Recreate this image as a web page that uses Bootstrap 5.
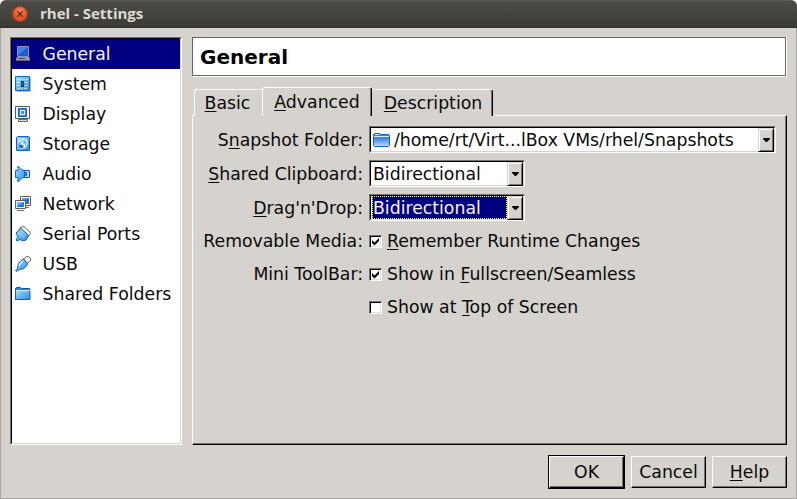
<!DOCTYPE html>
<html lang="en">
<head>
<meta charset="utf-8">
<meta name="viewport" content="width=device-width, initial-scale=1">
<title>rhel - Settings</title>
<link href="https://cdn.jsdelivr.net/npm/bootstrap@5.3.0/dist/css/bootstrap.min.css" rel="stylesheet">
<style>
body{font-family:"DejaVu Sans",sans-serif;font-size:17.3px;line-height:20px;color:#0a0a0a;background:#fff;overflow:hidden}
u{text-decoration:underline;text-decoration-thickness:1px;text-underline-offset:2px;text-decoration-skip-ink:none}
.win{width:797px;height:499px;background:#d6d2cd;border-radius:6px 6px 0 0;overflow:hidden}
.titlebar{height:28px;padding-left:12px;background:linear-gradient(#5a5954 0,#4c4b45 2px,#45443f 50%,#3c3b37 92%,#32312e 100%);color:#dfdbd2;font:bold 15px/28px "Open Sans","Noto Sans",sans-serif}
.titlebar span{margin-left:12px;line-height:27px;height:28px}
.client{height:471px;border:1px solid #aaa6a1;border-top:0;padding:9px 9px 10px 9px}
.side{width:172px;height:408px;background:#fff;border:1px solid;border-color:#76736e #fff #fff #76736e}
.side-in{height:406px;border:1px solid;border-color:#000 #d6d2cd #d6d2cd #000}
.side .list-group-item{height:30px;border:0;border-radius:0;padding:0 0 0 3px;gap:11.500px;background:none;color:#0a0a0a;white-space:nowrap}
.side .list-group-item.active{background:#000080;color:#f4f4ff;margin:0}
.side svg{flex:none}
.main{width:595px}
.heading{height:40px;border:1px solid;border-color:transparent #fff #fff transparent;border-width:0 1px 1px 0}
.heading h1{height:39px;margin:0;border:1px solid #666;background:#fff;font-size:20px;line-height:38px;font-weight:700;color:#000;padding-left:7px}
.tabs{height:29px;margin-top:10px;padding-left:2px}
.tb{height:27px;border:1px solid;border-color:#fff #000 transparent #fff;border-bottom:0;border-radius:3px 3px 0 0;line-height:26px;text-align:center;color:#0a0a0a;background:#d6d2cd}
.tb-a{width:69px;border-right:0;padding-right:3px}
.tb-b{width:110px;height:29px;line-height:28px;margin-left:-1px;z-index:1;box-shadow:inset -1px 0 #77746f;position:relative}
.tb-c{width:121px;border-left:0;box-shadow:inset -1px 0 #77746f;padding-left:2px}
.pane{height:330px;border:1px solid;border-color:#fff #000 #000 #fff;box-shadow:inset -1px -1px #77746f;margin-top:-1px;padding-top:10px}
.frow{height:27px;margin-bottom:7px}
.frow.chk{height:26px}
.lab{width:170px;margin-right:6px;text-align:right;white-space:nowrap;flex:none}
.combo{height:27px;border:1px solid;border-color:#76736e #fff #fff #76736e;width:156px}
.combo-in{height:25px;border:1px solid;border-color:#000 #d6d2cd #d6d2cd #000;background:#fff;padding:0}
.combo.wide{width:407px}
.val{height:23px;line-height:24px;white-space:nowrap;padding-left:2px;min-width:0}
.val.sel{background:#000080;color:#f4f4ff;outline:1px dotted #ffff7f;outline-offset:-1px;margin:0 0 0 1px;padding-left:1px}
.arr{width:16px;height:24px;flex:none;background:#d6d2cd;border:1px solid;border-color:#d6d2cd #000 #000 #d6d2cd;box-shadow:inset 1px 1px #fff,inset -1px -1px #77746f}
.box{width:13px;height:13px;flex:none;margin-right:5px;background:#fff;border:1px solid;border-color:#76736e #fff #fff #76736e;box-shadow:inset 1px 1px #000,inset -1px -1px #e4dede}
.box svg{display:block}
.foot{margin-top:10px;gap:6px}
.foot .btn{width:75px;height:32px;border:1px solid;border-color:#fff #000 #000 #fff;border-radius:0;padding:0;font-size:17.3px;line-height:29px;background:#d6d2cd;color:#0a0a0a;box-shadow:inset -1px -1px #77746f}
.foot .okf{border:1px solid #000;height:34px;width:77px}
</style>
<script src="https://cdn.jsdelivr.net/npm/bootstrap@5.3.0/dist/js/bootstrap.bundle.min.js"></script>
</head>
<body>
<svg width="0" height="0" class="position-absolute">
<defs>
<linearGradient id="b" x1="0" y1="0" x2="1" y2="1"><stop offset="0" stop-color="#a4dffd"/><stop offset="1" stop-color="#2a88ea"/></linearGradient>
<linearGradient id="f" x1="0" y1="0" x2="0" y2="1"><stop offset="0" stop-color="#2f7fdf"/><stop offset=".4" stop-color="#4088e2"/><stop offset="1" stop-color="#c4dcfa"/></linearGradient>
<radialGradient id="c" cy=".3"><stop offset="0" stop-color="#f98560"/><stop offset="1" stop-color="#e5501f"/></radialGradient>
</defs>
</svg>
<div class="win">
<header class="titlebar d-flex align-items-center">
<svg width="16" height="16" viewBox="0 0 16 16"><circle cx="8" cy="8" r="7.500" fill="url(#c)" stroke="#9c3a1d" stroke-width=".8"/><path d="M5.400 5.400l5.200 5.200M10.600 5.400l-5.200 5.200" stroke="#4b2114" stroke-width="1.300"/></svg>
<span>rhel - Settings</span>
</header>
<div class="client d-flex justify-content-between">
<nav class="side">
<div class="side-in list-group rounded-0">
<a class="list-group-item active d-flex align-items-center"><svg width="16" height="16"><path d="M2.500 .5h11v10h-11z" fill="#1d5bd0" stroke="#8c8fb5"/><path d="M3 1h10L3 9z" fill="#3d83e8"/><path d="M2 11h12l1 2v2H1v-2z" fill="#9a9bc0"/><path d="M1 14.500h14" stroke="#5c5c82"/><path d="M3 12.500h7" stroke="#44446c"/></svg>General</a>
<a class="list-group-item d-flex align-items-center"><svg width="16" height="16"><path d="M.5.500h14v14H.5z" fill="url(#b)" stroke="#1268c4"/><path d="M15.500 2v13.500H2" fill="none" stroke="#b9b9a8"/><path d="M3 3.500h2m1 0h1m2-1v2m2-1h2M2.500 6.500h2m-2 3h2m6-3h2m-2 3h2M3 12.500h2m2-1v2m3-2v2m1-1h1" stroke="#e2f6ff"/><path d="M6 5h3v6H6z" fill="#263c50"/><path d="M7 6h1v3H7z" fill="#62768a"/></svg>System</a>
<a class="list-group-item d-flex align-items-center"><svg width="16" height="16"><path d="M3.500 13.500h9v2h-9z" fill="#ddd" stroke="#6c6c62"/><path d="M.5.500h14v12H.5z" fill="#f5f5ef" stroke="#56564e"/><path d="M3.500 2.500h8v8h-8z" fill="#2686f2" stroke="#1560d0"/><path d="M5.500 4.500h4v4h-4z" fill="#3c96fa" stroke="#fff"/></svg>Display</a>
<a class="list-group-item d-flex align-items-center"><svg width="16" height="16"><path d="M2.500.500h11l1 1v13h-13v-13z" fill="url(#b)" stroke="#1460b8"/><path d="M4 6.500c0-4.500 8-4.500 8 0 0 4-2.500 5.500-4.500 5.500 2.500-1.500 2.500-3 1.500-4-3 1-3-2.500-.5-2.500" fill="none" stroke="#fff" stroke-width="1.200"/><path d="M4.500 9.500l3.500 2" stroke="#174d98" stroke-width="1.500"/></svg>Storage</a>
<a class="list-group-item d-flex align-items-center"><svg width="16" height="16"><path d="M8.500 4.500h6v7h-6z" fill="#9adcff" stroke="#145dae"/><path d="M2.500.5c2 0 3 2 4 3 1 .5 2 1 3 1v7c-1 0-2 .5-3 1-1 1-2 3-4 3 .5-1.500.5-2.500.5-4H.5v-7H3c0-1.500 0-3-.5-4z" fill="url(#b)" stroke="#1763b6"/><path d="M11 6v4" stroke="#2077d8" stroke-width="2"/></svg>Audio</a>
<a class="list-group-item d-flex align-items-center"><svg width="16" height="16"><path d="M8 11.500h6" stroke="#77776f"/><path d="M5.500.500h10v9h-10z" fill="#fff" stroke="#5e5e58"/><path d="M7 2h7v6H7z" fill="#176fe4"/><path d="M7 2h7L7 6z" fill="#4a9cf4"/><path d="M.5 4.500h10v8H.5z" fill="#fff" stroke="#5e5e58"/><path d="M2 6h7v5H2z" fill="#1f7de8"/><path d="M2 6h7l-7 4z" fill="#70b8ff"/><path d="M2 14.500h7" stroke="#77776f"/></svg>Network</a>
<a class="list-group-item d-flex align-items-center"><svg width="16" height="16"><path d="M5 1.500l4-1 6.500 6-1 3-3 2-7-7z" fill="#f2f2ef" stroke="#70706a"/><path d="M1 7l5-4.500 7.500 7-2.500 4.500-3 1-3-1.500-3 1.500-1-1 2-3z" fill="url(#b)" stroke="#155eb4"/><path d="M4 6.500l5 5M6 4.500l5 5" stroke="#c7edff"/></svg>Serial Ports</a>
<a class="list-group-item d-flex align-items-center"><svg width="16" height="16"><path d="M8.500 3l3-2.500h2l2 2v2l-3 3z" fill="#f4f4f0" stroke="#666660"/><path d="M8.500 3l4 4.500c-1 4-5 6-8 6l-3 2-1-1 2-2c0-4 2-7.500 6-9.500z" fill="url(#b)" stroke="#155eb4"/><path d="M4 10c1-2 2-4 4-5" fill="none" stroke="#e2f6ff" stroke-width="1.500"/></svg>USB</a>
<a class="list-group-item d-flex align-items-center"><svg width="16" height="16"><path d="M.5 2.500l1-1h4l1 1h8v11H.5z" fill="#2382dc" stroke="#0e5eb0"/><path d="M1 4.500h14v9H1z" fill="url(#b)"/><path d="M1 4.500h14" stroke="#c8efff"/><path d="M.5 3v10.500h14.500v-9" fill="none" stroke="#1263b4"/></svg>Shared Folders</a>
</div>
</nav>
<main class="main">
<div class="heading"><h1>General</h1></div>
<div class="tabs d-flex align-items-end">
<div class="tb tb-a"><u>B</u>asic</div><div class="tb tb-b"><u>A</u>dvanced</div><div class="tb tb-c"><u>D</u>escription</div>
</div>
<div class="pane">
<div class="frow d-flex align-items-center"><div class="lab">S<u>n</u>apshot Folder:</div><div class="combo wide"><div class="combo-in d-flex"><div class="val flex-grow-1 d-flex align-items-center"><svg width="17" height="16" class="me-1"><path d="M.5 3l1-1.500h5l1 1h8l1 1v10l-1 1h-14l-1-1z" fill="url(#f)" stroke="#1765c4"/><path d="M2 2.500h4M1 4.500h15" stroke="#d7edff"/></svg><span>/home/rt/Virt...lBox VMs/rhel/Snapshots</span></div><div class="arr d-flex align-items-center justify-content-center"><svg width="7" height="4"><path d="M0 0h7v1L4 4H3L0 1z"/></svg></div></div></div></div>
<div class="frow d-flex align-items-center"><div class="lab"><u>S</u>hared Clipboard:</div><div class="combo"><div class="combo-in d-flex"><div class="val flex-grow-1">Bidirectional</div><div class="arr d-flex align-items-center justify-content-center"><svg width="7" height="4"><path d="M0 0h7v1L4 4H3L0 1z"/></svg></div></div></div></div>
<div class="frow d-flex align-items-center"><div class="lab"><u>D</u>rag'n'Drop:</div><div class="combo"><div class="combo-in d-flex"><div class="val sel flex-grow-1">Bidirectional</div><div class="arr d-flex align-items-center justify-content-center"><svg width="7" height="4"><path d="M0 0h7v1L4 4H3L0 1z"/></svg></div></div></div></div>
<div class="frow chk d-flex align-items-center"><div class="lab">Removable Media:</div><div class="box"><svg width="11" height="11"><path d="M2 4l2.500 2.500L9 2v3L4.500 9.500 2 7z"/></svg></div><div><u>R</u>emember Runtime Changes</div></div>
<div class="frow chk d-flex align-items-center"><div class="lab">Mini ToolBar:</div><div class="box"><svg width="11" height="11"><path d="M2 4l2.500 2.500L9 2v3L4.500 9.500 2 7z"/></svg></div><div>Show in <u>F</u>ullscreen/Seamless</div></div>
<div class="frow chk d-flex align-items-center"><div class="lab"></div><div class="box"></div><div>Show at <u>T</u>op of Screen</div></div>
</div>
<div class="foot d-flex justify-content-end align-items-center"><div class="okf"><button class="btn">OK</button></div><button class="btn">Cancel</button><button class="btn"><u>H</u>elp</button></div>
</main>
</div>
</div>
</body>
</html>
